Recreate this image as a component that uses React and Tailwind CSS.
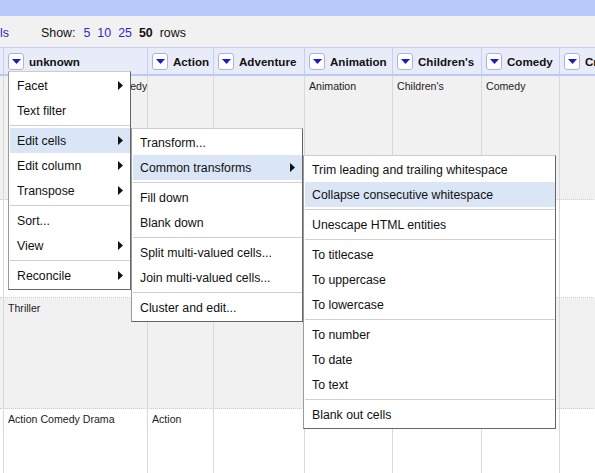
import React from 'react';

const columns = [
  { key: 'idx', label: '', width: 'w-[4px]' },
  { key: 'unknown', label: 'unknown', width: 'w-[144px]' },
  { key: 'action', label: 'Action', width: 'w-[66px]' },
  { key: 'adventure', label: 'Adventure', width: 'w-[91px]' },
  { key: 'animation', label: 'Animation', width: 'w-[88px]' },
  { key: 'childrens', label: "Children's", width: 'w-[89px]' },
  { key: 'comedy', label: 'Comedy', width: 'w-[78px]' },
  { key: 'crime', label: 'Crime', width: 'w-[120px]' },
];

const rows = [
  {
    height: 'h-[124px]',
    bg: 'bg-[#f1f1f1]',
    cells: { unknown: "Animation Children's Comedy", animation: 'Animation', childrens: "Children's", comedy: 'Comedy' },
  },
  { height: 'h-[98px]', bg: 'bg-white', cells: {} },
  { height: 'h-[111px]', bg: 'bg-[#f1f1f1]', cells: { unknown: 'Thriller' } },
  { height: 'h-[120px]', bg: 'bg-white', cells: { unknown: 'Action Comedy Drama', action: 'Action' } },
];

// menus: items, null = separator
const columnMenu = [
  { label: 'Facet', sub: true },
  { label: 'Text filter' },
  null,
  { label: 'Edit cells', sub: true, active: true },
  { label: 'Edit column', sub: true },
  { label: 'Transpose', sub: true },
  null,
  { label: 'Sort...' },
  { label: 'View', sub: true },
  null,
  { label: 'Reconcile', sub: true },
];

const editCellsMenu = [
  { label: 'Transform...' },
  { label: 'Common transforms', sub: true, active: true },
  null,
  { label: 'Fill down' },
  { label: 'Blank down' },
  null,
  { label: 'Split multi-valued cells...' },
  { label: 'Join multi-valued cells...' },
  null,
  { label: 'Cluster and edit...' },
];

const transformsMenu = [
  { label: 'Trim leading and trailing whitespace' },
  { label: 'Collapse consecutive whitespace', active: true },
  null,
  { label: 'Unescape HTML entities' },
  null,
  { label: 'To titlecase' },
  { label: 'To uppercase' },
  { label: 'To lowercase' },
  null,
  { label: 'To number' },
  { label: 'To date' },
  { label: 'To text' },
  null,
  { label: 'Blank out cells' },
];

const DropdownButton = () => (
  <div className="w-4 h-[17px] shrink-0 rounded-[3px] border border-[#aab3e2] bg-white flex items-center justify-center">
    <svg width="9" height="5" viewBox="0 0 9 5">
      <polygon points="0,0 9,0 4.5,5" fill="#1c1cc4" />
    </svg>
  </div>
);

const Menu = ({ items, className }) => (
  <div
    className={`absolute bg-white border border-t-[#cccccc] border-l-[#9a9a9a] border-r-[#666666] border-b-[#666666] pl-[1px] py-[1px] text-[12.3px] text-[#111] ${className}`}
  >
    {items.map((item, i) =>
      item === null ? (
        <div key={i} className="h-px bg-[#cfcfcf] my-[2px]" />
      ) : (
        <div
          key={i}
          className={`relative h-[25px] flex items-center pl-[7px] pt-px whitespace-nowrap ${item.active ? 'bg-[#dae6f6]' : ''}`}
        >
          {item.label}
          {item.sub && (
            <svg className="absolute right-[7px] top-[8px]" width="5" height="9" viewBox="0 0 5 9">
              <polygon points="0,0 5,4.5 0,9" fill="#111" />
            </svg>
          )}
        </div>
      )
    )}
  </div>
);

export default function App() {
  return (
    <div className="relative w-[595px] h-[473px] overflow-hidden bg-white font-['Liberation_Sans',Arial,sans-serif]">
      {/* top bar */}
      <div className="h-4 bg-[#b9cafa]" />

      {/* pager */}
      <div className="h-[31px] pt-[3px] bg-[#f1f1f1] flex items-center text-[12.4px] text-[#111]">
        <div className="w-[41px] text-[#2b2bc8]">ls</div>
        <div className="flex items-center gap-[7px]">
          <span className="mr-[1px]">Show:</span>
          <span className="text-[#2b2bc8]">5</span>
          <span className="text-[#2b2bc8]">10</span>
          <span className="text-[#2b2bc8]">25</span>
          <span className="font-bold">50</span>
          <span>rows</span>
        </div>
      </div>

      {/* header */}
      <div className="flex h-[29px] bg-[#e8ecf9] border-t border-[#c5cff4] border-b-2 border-b-[#b9c9f8] w-max">
        {columns.map((col) => (
          <div
            key={col.key}
            className={`${col.width} shrink-0 h-full border-r border-[#c5cff4] flex items-center ${col.label ? 'pl-[4px]' : ''} gap-[5px] overflow-hidden`}
          >
            {col.label && (
              <>
                <DropdownButton />
                <span className="mt-[2px] text-[11.6px] font-bold text-[#111] whitespace-nowrap">{col.label}</span>
              </>
            )}
          </div>
        ))}
      </div>

      {/* body rows */}
      {rows.map((row, r) => (
        <div key={r} className={`flex w-max ${row.height} ${row.bg} border-b border-dotted border-[#cccccc]`}>
          {columns.map((col) => (
            <div
              key={col.key}
              className={`${col.width} shrink-0 h-full border-r border-[#d9d9d9] ${col.label ? 'pl-[4px]' : ''} pt-[3px] text-[10.6px] text-[#222] overflow-hidden whitespace-nowrap`}
            >
              {row.cells[col.key] || ''}
            </div>
          ))}
        </div>
      ))}

      {/* open column menus */}
      <Menu items={columnMenu} className="left-[8px] top-[71px] w-[123px]" />
      <Menu items={editCellsMenu} className="left-[131px] top-[128px] w-[172px]" />
      <Menu items={transformsMenu} className="left-[303px] top-[155px] w-[253px]" />
    </div>
  );
}
